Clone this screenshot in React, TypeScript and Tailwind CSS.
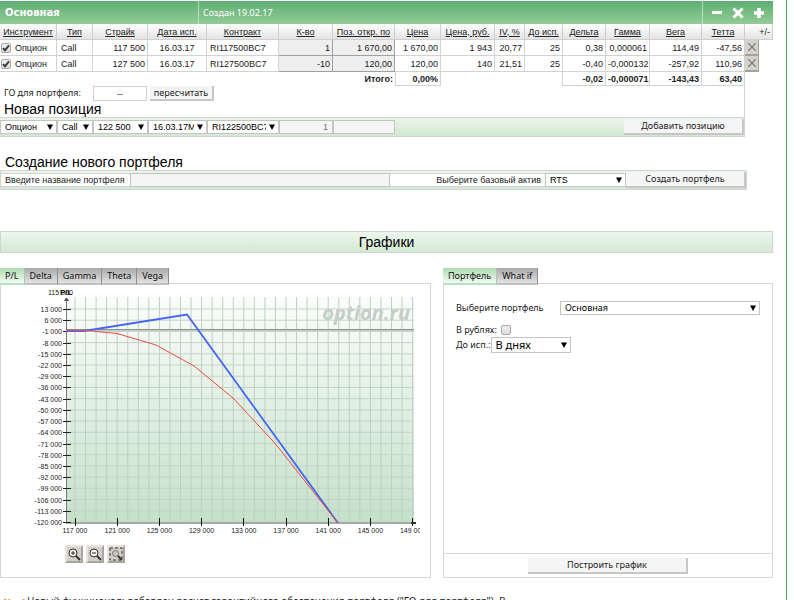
// src/pages/portfolio/App.tsx
import { useState } from 'react'
import type { ReactNode } from 'react'
import clsx from 'clsx'

interface Position {
  strike: string
  contract: string
  qty: string
  open: string
  price: string
  priceRub: string
  iv: string
  delta: string
  gamma: string
  vega: string
  theta: string
}

const positions: Position[] = [
  { strike: '117 500', contract: 'RI117500BC7', qty: '1', open: '1 670,00', price: '1 670,00', priceRub: '1 943', iv: '20,77', delta: '0,38', gamma: '0,000061', vega: '114,49', theta: '-47,56' },
  { strike: '127 500', contract: 'RI127500BC7', qty: '-10', open: '120,00', price: '120,00', priceRub: '140', iv: '21,51', delta: '-0,40', gamma: '-0,000132', vega: '-257,92', theta: '110,96' },
]

const headers = ['Инструмент', 'Тип', 'Страйк', 'Дата исп.', 'Контракт', 'К-во', 'Поз. откр. по', 'Цена', 'Цена, руб.', 'IV, %', 'До исп.', 'Дельта', 'Гамма', 'Вега', 'Тетта']

const colWidths = [
  'w-[57px]', 'w-[36px]', 'w-[55px]', 'w-[59px]', 'w-[72px]', 'w-[54px]', 'w-[62px]', 'w-[46px]',
  'w-[54px]', 'w-[30px]', 'w-[38px]', 'w-[43px]', 'w-[44px]', 'w-[52px]', 'w-[43px]', 'w-[28px]',
]

const ui = 'font-[Noto_Sans,sans-serif]'

interface SelectProps {
  id?: string
  label?: string
  options: string[]
  className?: string
}

function Select({ id, label, options, className }: SelectProps) {
  return (
    <span className={clsx('relative block bg-white', className)}>
      <select id={id} aria-label={label} className="block h-full w-full appearance-none overflow-hidden border border-[#c4c4c4] bg-transparent pl-1 pr-3 text-black">
        {options.map(o => <option key={o}>{o}</option>)}
      </select>
      <svg viewBox="0 0 6 6" className="pointer-events-none absolute right-1 top-1/2 h-1.5 w-1.5 -translate-y-1/2">
        <path d="M0 0.5h6L3 6z" fill="#000" />
      </svg>
    </span>
  )
}

function Checkbox({ label, initial = false, id }: { label?: string; initial?: boolean; id?: string }) {
  const [checked, setChecked] = useState(initial)
  return (
    <span className="relative block h-2.5 w-2.5 shrink-0">
      <input
        id={id}
        type="checkbox"
        aria-label={label}
        checked={checked}
        onChange={e => setChecked(e.target.checked)}
        className="block h-2.5 w-2.5 appearance-none rounded-xs border border-[#a9a9a9] bg-linear-to-b from-[#efefef] to-[#dcdcdc]"
      />
      {checked && (
        <svg viewBox="0 0 10 10" className="pointer-events-none absolute inset-0 h-2.5 w-2.5">
          <path d="M2 5.2 4 7.4 8 2.4" fill="none" stroke="#333" strokeWidth="1.8" />
        </svg>
      )}
    </span>
  )
}

function Button({ children, className }: { children: ReactNode; className?: string }) {
  return (
    <button className={clsx('flex items-center justify-center border-b-2 border-r-2 border-[#c6c6c6] bg-[#f5f5f5] text-[#222]', ui, className)}>
      {children}
    </button>
  )
}

/* ── Portfolio table ── */
function PortfolioTable() {
  const cell = 'border-b border-r border-[#d2d2d2] px-1'
  const num = 'border-b border-r border-[#d2d2d2] px-0.5 text-right'
  return (
    <table className="w-full table-fixed border-separate border-spacing-0 whitespace-nowrap leading-3">
      <colgroup>
        {colWidths.map((w, i) => <col key={i} className={w} />)}
      </colgroup>
      <thead>
        <tr className="h-4">
          {headers.map(h => (
            <th key={h} className="border-b border-r border-[#cfcfcf] bg-linear-to-b from-white to-[#e4e4e4] p-0 text-center font-normal">
              <a href="#sort" className="underline">{h}</a>
            </th>
          ))}
          <th className="border-b border-r border-[#cfcfcf] bg-linear-to-b from-white to-[#e4e4e4] px-0.5 text-right font-normal">+/-</th>
        </tr>
      </thead>
      <tbody>
        {positions.map(p => (
          <tr key={p.contract} className="h-4">
            <td className="border-b border-r border-[#d2d2d2] p-0">
              <span className="flex items-center gap-1 pl-px"><Checkbox label={p.contract} initial />Опцион</span>
            </td>
            <td className={cell}>Call</td>
            <td className={num}>{p.strike}</td>
            <td className={clsx(cell, 'text-center')}>16.03.17</td>
            <td className="border-b border-r border-[#d2d2d2] px-[3px]">{p.contract}</td>
            <td className="p-0">
              <input aria-label="К-во" defaultValue={p.qty} className="block h-4 w-full border-b border-r border-[#a0a0a0] bg-[#efefef] px-0.5 text-right" />
            </td>
            <td className="p-0">
              <input aria-label="Поз. откр. по" defaultValue={p.open} className="block h-4 w-full border-b border-r border-[#a0a0a0] bg-[#efefef] px-0.5 text-right" />
            </td>
            <td className={num}>{p.price}</td>
            <td className={num}>{p.priceRub}</td>
            <td className={num}>{p.iv}</td>
            <td className={num}>25</td>
            <td className={num}>{p.delta}</td>
            <td className={num}>{p.gamma}</td>
            <td className={num}>{p.vega}</td>
            <td className={num}>{p.theta}</td>
            <td className="p-0">
              <button aria-label="Удалить" className="flex h-4 w-3.5 items-center justify-center border-b-2 border-r border-[#a5a29b] bg-[#d6d2ca]">
                <svg viewBox="0 0 8 8" className="h-2 w-2"><path d="M0 0l8 8M8 0L0 8" stroke="#77746e" strokeWidth="1.2" /></svg>
              </button>
            </td>
          </tr>
        ))}
        <tr className="h-3.5 font-bold">
          <td colSpan={6} />
          <td className="px-0.5 text-right">Итого:</td>
          <td className="border-x border-b border-[#d2d2d2] px-0.5 text-right">0,00%</td>
          <td colSpan={3} className="border-r border-[#d2d2d2]" />
          <td className={num}>-0,02</td>
          <td className={num}>-0,000071</td>
          <td className={num}>-143,43</td>
          <td className={num}>63,40</td>
          <td />
        </tr>
      </tbody>
    </table>
  )
}

/* ── P/L chart ── */
const yLabels = Array.from({ length: 20 }, (_, i) => 13000 - i * 7000)
const xLabels = Array.from({ length: 9 }, (_, i) => 117000 + i * 4000)
const px = (v: number) => 74 + ((v - 117000) / 1000) * 10.55
const py = (v: number) => 25 + ((13000 - v) / 7000) * 11.21
const fmt = (v: number) => `${Math.trunc(v / 1000)} 000`

function Chart() {
  return (
    <svg width="419" height="255" viewBox="0 0 419 255" className="block shrink-0 overflow-hidden font-[Liberation_Sans,Arial,sans-serif] text-[7px]">
      <defs>
        <linearGradient id="plot" x1="0" y1="0" x2="0" y2="1">
          <stop offset="0" stopColor="#fbfdfb" />
          <stop offset="1" stopColor="#c4e1c9" />
        </linearGradient>
      </defs>
      <rect x="65" y="13" width="348" height="226" fill="url(#plot)" />
      {Array.from({ length: 33 }, (_, i) => (
        <path key={i} d={`M${px(117000 + i * 1000)} 13V238`} stroke="#becfc4" strokeWidth="1" />
      ))}
      {yLabels.map(v => (
        <path key={v} d={`M65 ${py(v)}H413`} stroke="#c3d3c8" strokeWidth="1" />
      ))}
      <text x="409" y="36" textAnchor="end" className="font-[Open_Sans,Noto_Sans,sans-serif] text-[20px] font-bold italic" fill="#c3cec8">option.ru</text>
      <path d="M65 45.5H413" stroke="#8b938e" />
      <path d="M65 46.5H413" stroke="#c4cbc6" />
      <path d="M65.5 14V239" stroke="#777" />
      <path d="M63.5 16.5 65.5 14l2 2.500z" fill="#555" stroke="#555" />
      <path d="M65 239H413" stroke="#a4aca6" strokeWidth="2" />
      {yLabels.map(v => (
        <g key={v}>
          <path d={`M62 ${Math.round(py(v)) + 0.5}H70`} stroke="#222" />
          <text x="61" y={Math.round(py(v)) + 3} textAnchor="end" fill="#222">{fmt(v)}</text>
        </g>
      ))}
      {xLabels.map(v => (
        <g key={v}>
          <path d={`M${Math.floor(px(v)) + 0.5} 234V242`} stroke="#111" />
          <text x={px(v)} y="249" textAnchor="middle" fill="#222">{fmt(v)}</text>
        </g>
      ))}
      <path d="M410 239h5" stroke="#333" strokeWidth="2" />
      <text x="47" y="11" fill="#222">115 000</text>
      <text x="59" y="11" className="text-[8px] font-bold" fill="#111">P/L</text>
      <path d="M65 47H83L186 30.500 337 239" fill="none" stroke="#4565f5" strokeWidth="1.800" />
      <path d="M65 46 86 46.500 116 49.500 155 61 193 82 232 114 271 156 277 163 337 239" fill="none" stroke="#f04a42" strokeWidth="1" />
    </svg>
  )
}

function ToolButton({ label, children }: { label: string; children: ReactNode }) {
  return (
    <button aria-label={label} className="flex h-[18px] w-[18px] items-center justify-center border-2 border-b-[#a9a69f] border-l-[#e8e5de] border-r-[#a9a69f] border-t-[#e8e5de] bg-[#d4d0c8]">
      <svg viewBox="0 0 14 14" className="h-3.5 w-3.5" fill="none" stroke="#333">{children}</svg>
    </button>
  )
}

function Tabs({ items }: { items: string[] }) {
  const [active, setActive] = useState(items[0])
  return (
    <div role="tablist" className="relative z-10 -mb-0.5 flex h-[17px]">
      {items.map(t => (
        <button
          key={t}
          role="tab"
          aria-selected={t === active}
          onClick={() => setActive(t)}
          className={clsx(
            'border-b-2 border-r px-[5px] text-center leading-3 text-[#111]',
            t === active
              ? 'border-b-[#b5e3bd] border-r-[#a9c9ae] bg-linear-to-b from-[#add9b1] to-[#f3faf3]'
              : 'border-b-[#c0c0c0] border-r-[#8d8d8d] bg-linear-to-b from-[#a9a9a9] to-[#e2e2e2]',
          )}
        >
          {t}
        </button>
      ))}
    </div>
  )
}

export default function App() {
  return (
    <div className="h-screen overflow-hidden bg-white font-[Liberation_Sans,Arial,sans-serif] text-[9px] leading-3 text-[#222]">
      <div className="mr-[7px] h-full border-r border-[#4fae5a] pr-[13px] pt-px">
        {/* Title bar */}
        <header className="flex h-[23px] items-stretch bg-linear-to-b from-[#5dae72] to-[#93cb97] text-white">
          <h1 className="flex w-[199px] items-center border-r border-[#b5dcba] pl-[5px] font-[DejaVu_Sans,sans-serif] text-[10px] font-bold">Основная</h1>
          <div className={clsx('flex flex-1 items-center pl-1', ui)}>Создан 19.02.17</div>
          <div className="flex w-[71px] items-center gap-[9px] border-l border-[#b5dcba] pl-2">
            <button aria-label="Свернуть"><svg viewBox="0 0 12 12" className="h-3 w-3"><path d="M1 5.500h10" stroke="#fff" strokeWidth="3" /></svg></button>
            <button aria-label="Закрыть"><svg viewBox="0 0 12 12" className="h-3 w-3"><path d="M1.500 1.500 10.500 10.500M10.500 1.500 1.500 10.500" stroke="#fff" strokeWidth="3" /></svg></button>
            <button aria-label="Добавить"><svg viewBox="0 0 12 12" className="h-3 w-3"><path d="M1 6h10M6 1v10" stroke="#fff" strokeWidth="3.500" /></svg></button>
          </div>
        </header>

        <PortfolioTable />

        {/* New position */}
        <section className="mr-7 border-r border-[#d2d2d2]">
          <div className={clsx('flex h-[15px] items-stretch', ui)}>
            <label htmlFor="go" className="w-[93px] pl-1 pt-px">ГО для портфеля:</label>
            <input id="go" defaultValue="--" className="w-[54px] border border-[#d0d0d0] text-center" />
            <Button className="ml-[3px] w-16">пересчитать</Button>
          </div>
          <h2 className="pl-1 text-sm/4 text-black">Новая позиция</h2>
          <div className="flex h-5 items-center border-y border-[#cfd6cf] bg-linear-to-b from-[#eaf5ea] to-[#d3e9d3]">
            <Select label="Инструмент" options={['Опцион', 'Фьючерс']} className="h-3.5 w-[57px]" />
            <Select label="Тип" options={['Call', 'Put']} className="h-3.5 w-[36px]" />
            <Select label="Страйк" options={['122 500']} className="h-3.5 w-[55px]" />
            <Select label="Дата исп." options={['16.03.17М']} className="h-3.5 w-[59px]" />
            <Select label="Контракт" options={['RI122500BC7']} className="h-3.5 w-[72px]" />
            <input aria-label="К-во" defaultValue="1" className="h-3.5 w-[54px] border border-[#c4c4c4] bg-[#f5f5f5] px-1 text-right text-[#777]" />
            <input aria-label="Поз. откр. по" className="h-3.5 w-[62px] border border-[#c4c4c4] bg-[#f5f5f5] px-1" />
            <Button className="ml-auto h-4 w-[120px]">Добавить позицию</Button>
          </div>
        </section>

        {/* New portfolio */}
        <section className="mr-[26px] mt-[17px]">
          <h2 className="pl-[5px] text-sm/4 text-black">Создание нового портфеля</h2>
          <div className="flex h-5 items-center border border-[#cfd6cf] bg-linear-to-b from-[#eaf5ea] to-[#d3e9d3]">
            <label htmlFor="pname" className="h-3.5 w-[129px] border-y border-[#d2d2d2] bg-white pl-1">Введите название портфеля</label>
            <input id="pname" className="h-3.5 min-w-0 flex-1 border border-[#c4c4c4] bg-[#f5f5f5] px-1" />
            <label htmlFor="asset" className="h-3.5 w-[155px] border-y border-[#d2d2d2] bg-white pr-1 text-right">Выберите базовый актив</label>
            <Select id="asset" options={['RTS']} className="h-3.5 w-[81px]" />
            <Button className="h-4 w-[120px]">Создать портфель</Button>
          </div>
        </section>

        <h2 className="mt-[41px] h-[22px] border border-[#cdd5cd] bg-linear-to-b from-[#ecf6ed] to-[#d3e9d3] text-center text-sm/5 text-black">Графики</h2>

        {/* Charts */}
        <div className="mt-[15px] grid grid-cols-[431fr_330fr] gap-3">
          <section className={clsx('flex flex-col', ui)}>
            <Tabs items={['P/L', 'Delta', 'Gamma', 'Theta', 'Vega']} />
            <div className="h-[295px] border border-[#d5d5d5]">
              <Chart />
              <div className="flex gap-[3px] pl-16 pt-1.5">
                <ToolButton label="Увеличить">
                  <circle cx="6" cy="6" r="4" fill="#f2f2ee" />
                  <path d="M4 6h4M6 4v4" />
                  <path d="M9 9l4 4" strokeWidth="2" />
                </ToolButton>
                <ToolButton label="Уменьшить">
                  <circle cx="6" cy="6" r="4" fill="#f2f2ee" />
                  <path d="M4 6h4" />
                  <path d="M9 9l4 4" strokeWidth="2" />
                </ToolButton>
                <ToolButton label="Выделить область">
                  <path d="M1 1h12v12H1z" strokeDasharray="3 2" />
                  <circle cx="6.500" cy="6.500" r="3" fill="#c6c6c6" stroke="#777" />
                  <path d="M9 9l4 4" strokeWidth="2" />
                </ToolButton>
              </div>
            </div>
          </section>

          <section className={clsx('flex flex-col', ui)}>
            <Tabs items={['Портфель', 'What if']} />
            <div className="flex h-[295px] flex-col border border-[#d5d5d5]">
              <div className="flex-1 pl-3 pr-3 pt-[17px]">
                <div className="flex items-center">
                  <label htmlFor="portfolio" className="w-[104px]">Выберите портфель</label>
                  <Select id="portfolio" options={['Основная']} className="h-3.5 flex-1" />
                </div>
                <div className="mt-2 flex h-3.5 items-center gap-1">
                  <label htmlFor="rub">В рублях:</label>
                  <Checkbox id="rub" />
                </div>
                <div className="flex items-center">
                  <label htmlFor="expiry">До исп.:</label>
                  <Select id="expiry" options={['В днях']} className="h-4 w-20 text-[11px]" />
                </div>
              </div>
              <div className="flex h-6 items-center justify-center border-t border-[#d5d5d5]">
                <Button className="h-4 w-40">Построить график</Button>
              </div>
            </div>
          </section>
        </div>

        <p className={clsx('mt-[17px] whitespace-nowrap pl-[3px] text-[10px]', ui)}>
          <b className="text-[9px] italic text-[#f5821f]">New!</b> Новый функционал: добавлен расчет гарантийного обеспечения портфеля ("ГО для портфеля"). В
        </p>
      </div>
    </div>
  )
}
